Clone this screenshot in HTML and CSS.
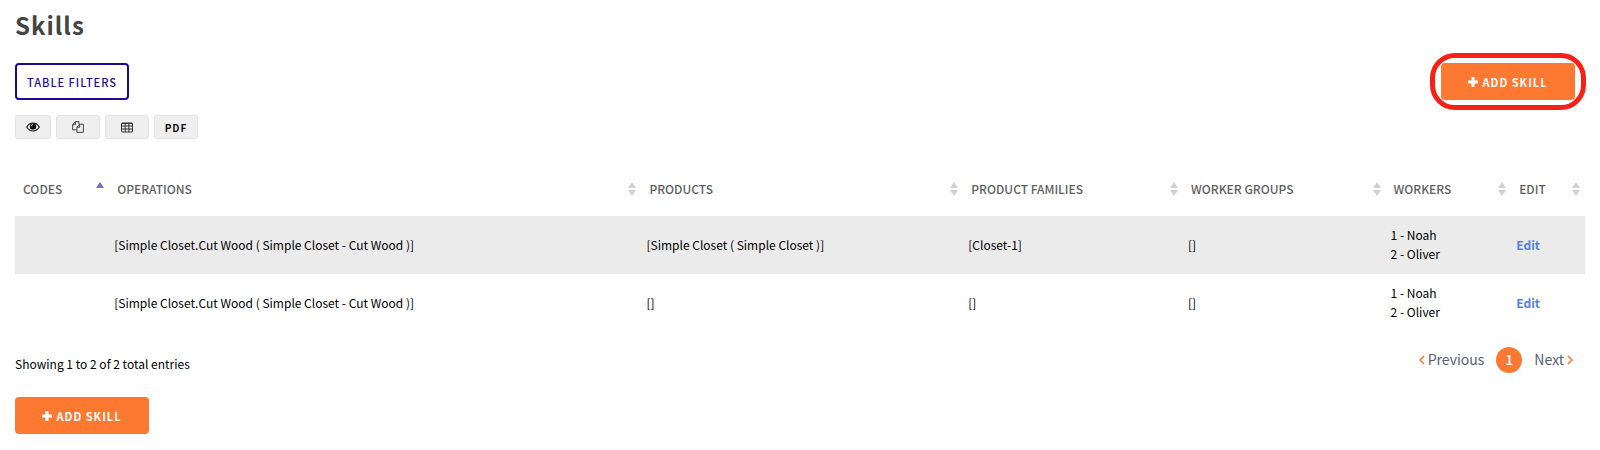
FILE: index.html
```html
<!DOCTYPE html>
<html lang="en">
<head>
<meta charset="utf-8">
<meta name="viewport" content="width=device-width, initial-scale=1">
<title>Skills</title>
<link rel="stylesheet" href="styles.css">
</head>
<body>
<main class="page">
  <h1 class="title">Skills</h1>
  <div class="toolbar">
    <button type="button" class="btn btn-outline">TABLE FILTERS</button>
    <div class="highlight">
      <button type="button" class="btn btn-primary"><svg class="plus" viewBox="0 0 10 10" aria-hidden="true"><path d="M5 0v10M0 5h10"/></svg>ADD SKILL</button>
    </div>
  </div>
  <div class="exports">
    <button type="button" class="tool tool-small" aria-label="Column visibility">
      <svg width="14" height="12" viewBox="0 0 14 12" aria-hidden="true"><path d="M.7 6Q3.200 2 7 2t6.300 4Q10.800 10 7 10T.7 6Z" fill="none" stroke="#111" stroke-width="1.200"/><circle cx="7" cy="5.400" r="3.200" fill="#111"/><path d="M5.200 5.300Q5.300 3.600 7 3.500" fill="none" stroke="#eee" stroke-width=".8"/></svg>
    </button>
    <button type="button" class="tool" aria-label="Copy">
      <svg width="12" height="12" viewBox="0 0 13 13" fill="none" stroke="#333" aria-hidden="true"><path d="M5 9.500H.7V4L3.700.7H7.500V3.500M3.700.7V4H.7M5.300 6.800 8.300 3.500H12.300V12.300H5.300ZM8.300 3.500V6.800H5.300"/></svg>
    </button>
    <button type="button" class="tool" aria-label="Excel">
      <svg width="12" height="11" viewBox="0 0 12 11" fill="none" stroke="#333" aria-hidden="true"><rect x=".5" y="1" width="11" height="9" rx="1"/><path d="M.5 4h11M.5 7h11M4.200 1v9M7.800 1v9"/><path d="M.5 1.500h11" /></svg>
    </button>
    <button type="button" class="tool">PDF</button>
  </div>
  <table class="grid">
    <colgroup>
      <col class="c-codes"><col class="c-operations"><col class="c-products"><col class="c-families"><col class="c-groups"><col class="c-workers"><col class="c-edit">
    </colgroup>
    <thead>
      <tr>
        <th scope="col" aria-sort="ascending"><span class="head">CODES<svg class="sort sorted" viewBox="0 0 8 14" aria-hidden="true"><path d="M0 6 4 0l4 6Z"/></svg></span></th>
        <th scope="col"><span class="head">OPERATIONS<svg class="sort" viewBox="0 0 8 14" aria-hidden="true"><path d="M0 6 4 0l4 6ZM0 8h8l-4 6Z"/></svg></span></th>
        <th scope="col"><span class="head">PRODUCTS<svg class="sort" viewBox="0 0 8 14" aria-hidden="true"><path d="M0 6 4 0l4 6ZM0 8h8l-4 6Z"/></svg></span></th>
        <th scope="col"><span class="head">PRODUCT FAMILIES<svg class="sort" viewBox="0 0 8 14" aria-hidden="true"><path d="M0 6 4 0l4 6ZM0 8h8l-4 6Z"/></svg></span></th>
        <th scope="col"><span class="head">WORKER GROUPS<svg class="sort" viewBox="0 0 8 14" aria-hidden="true"><path d="M0 6 4 0l4 6ZM0 8h8l-4 6Z"/></svg></span></th>
        <th scope="col"><span class="head">WORKERS<svg class="sort" viewBox="0 0 8 14" aria-hidden="true"><path d="M0 6 4 0l4 6ZM0 8h8l-4 6Z"/></svg></span></th>
        <th scope="col"><span class="head">EDIT<svg class="sort" viewBox="0 0 8 14" aria-hidden="true"><path d="M0 6 4 0l4 6ZM0 8h8l-4 6Z"/></svg></span></th>
      </tr>
    </thead>
    <tbody>
      <tr>
        <td></td>
        <td>[Simple Closet.Cut Wood ( Simple Closet - Cut Wood )]</td>
        <td>[Simple Closet ( Simple Closet )]</td>
        <td>[Closet-1]</td>
        <td>[]</td>
        <td>1 - Noah<br>2 - Oliver</td>
        <td><a class="edit" href="#">Edit</a></td>
      </tr>
      <tr>
        <td></td>
        <td>[Simple Closet.Cut Wood ( Simple Closet - Cut Wood )]</td>
        <td>[]</td>
        <td>[]</td>
        <td>[]</td>
        <td>1 - Noah<br>2 - Oliver</td>
        <td><a class="edit" href="#">Edit</a></td>
      </tr>
    </tbody>
  </table>
  <div class="footer">
    <p class="info">Showing 1 to 2 of 2 total entries</p>
    <nav class="pager" aria-label="Pagination">
      <a class="step" href="#"><svg class="chevron" viewBox="0 0 6 10" aria-hidden="true"><path d="M5 1 1 5l4 4"/></svg>Previous</a>
      <a class="current" href="#" aria-current="page">1</a>
      <a class="step" href="#">Next<svg class="chevron" viewBox="0 0 6 10" aria-hidden="true"><path d="m1 1 4 4-4 4"/></svg></a>
    </nav>
  </div>
  <button type="button" class="btn btn-primary"><svg class="plus" viewBox="0 0 10 10" aria-hidden="true"><path d="M5 0v10M0 5h10"/></svg>ADD SKILL</button>
</main>
</body>
</html>
```

FILE: styles.css
```css
* {
  box-sizing: border-box;
}

body {
  margin: 0;
  background: #fff;
  color: #000;
  font-family: "Noto Sans CJK SC", "Open Sans", sans-serif;
  font-size: 12px;
  line-height: 19px;
}

button {
  font-family: inherit;
  cursor: pointer;
}

a {
  text-decoration: none;
}

.page {
  padding: 7px 15px 16px;
}

.title {
  margin: 0 0 20px;
  color: #444;
  font-size: 24px;
  font-weight: 700;
  line-height: 36px;
  letter-spacing: 1px;
}

.toolbar {
  display: flex;
  justify-content: space-between;
  padding-right: 10px;
}

.btn {
  display: inline-flex;
  align-items: center;
  justify-content: center;
  height: 37px;
  border-radius: 4px;
  font-size: 11px;
  letter-spacing: 1px;
}

.btn-outline {
  padding: 0 10px;
  border: 2px solid #1c0a94;
  background: #fff;
  color: #1c0a94;
  font-weight: 500;
}

.btn-primary {
  gap: 4px;
  min-width: 134px;
  padding: 0 16px;
  border: 0;
  background: #fd7831;
  color: #fff;
  font-weight: 700;
}

.plus {
  width: 10px;
  height: 10px;
  fill: none;
  stroke: currentColor;
  stroke-width: 3;
}

.highlight {
  position: relative;
}

.highlight::after {
  content: "";
  position: absolute;
  inset: -10px -11px;
  border: 5px solid #fb2016;
  border-radius: 25px;
  pointer-events: none;
}

.exports {
  display: flex;
  gap: 5px;
  margin-top: 15px;
}

.tool {
  display: flex;
  align-items: center;
  justify-content: center;
  width: 44px;
  height: 24px;
  padding: 0;
  border: 1px solid #e3e3e3;
  border-radius: 3px;
  background: #efefef;
  color: #111;
  font-size: 10px;
  font-weight: 700;
  letter-spacing: 1px;
}

.tool-small {
  width: 36px;
}

.grid {
  width: 100%;
  margin-top: 24px;
  border-collapse: collapse;
  table-layout: fixed;
}

.c-codes { width: 6%; }
.c-operations { width: 33.900%; }
.c-products { width: 20.500%; }
.c-families { width: 14%; }
.c-groups { width: 12.900%; }
.c-workers { width: 8%; }
.c-edit { width: 4.700%; }

.grid th {
  height: 53px;
  padding: 0 5px 2px 8px;
  color: #5f5f5f;
  font-weight: 500;
  text-align: left;
  white-space: nowrap;
}

.head {
  display: flex;
  align-items: center;
  justify-content: space-between;
}

.sort {
  flex: none;
  width: 8px;
  height: 14px;
  fill: #d0d0d4;
}

.sorted {
  fill: #6e6ed8;
}

.grid td {
  height: 58px;
  padding: 9px 5px 11px;
}

.grid tbody tr:nth-child(odd) {
  background: #ebebeb;
}

.edit {
  color: #5580ea;
  font-weight: 700;
}

.footer {
  display: flex;
  align-items: center;
  justify-content: space-between;
  margin: 14px 0 24px;
}

.info {
  margin: 8px 0 0;
}

.pager {
  display: flex;
  align-items: center;
  gap: 12px;
  padding-right: 12px;
  font-size: 14px;
}

.step {
  display: flex;
  align-items: center;
  gap: 3px;
  color: #57607a;
}

.chevron {
  width: 6px;
  height: 10px;
  fill: none;
  stroke: #fd7831;
  stroke-width: 1.500;
}

.current {
  display: flex;
  align-items: center;
  justify-content: center;
  width: 26px;
  height: 26px;
  border-radius: 50%;
  background: #fd7831;
  color: #fff;
  font-weight: 500;
}
```
